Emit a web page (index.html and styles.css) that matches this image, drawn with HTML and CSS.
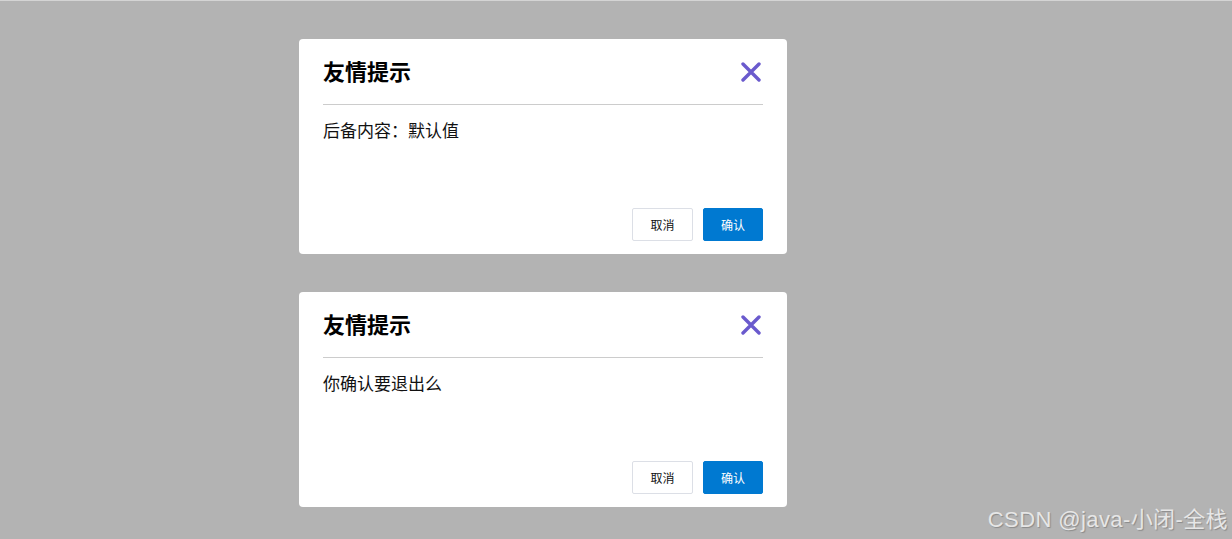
FILE: index.html
```html
<!DOCTYPE html>
<html lang="zh">
<head>
<meta charset="utf-8">
<title>友情提示</title>
<link rel="stylesheet" href="styles.css">
</head>
<body>
<div class="stage">
  <div class="dialog">
    <div class="dlg-head">
      <h2 class="dlg-title">友情提示</h2>
      <svg class="dlg-close" width="20" height="20" viewBox="0 0 20 20"><path d="M2 2 L18 18 M18 2 L2 18" stroke="#6a5acd" stroke-width="3.4" stroke-linecap="round"/></svg>
    </div>
    <div class="dlg-body">后备内容：默认值</div>
    <div class="dlg-foot">
      <button class="btn btn-cancel">取消</button>
      <button class="btn btn-ok">确认</button>
    </div>
  </div>
  <div class="dialog">
    <div class="dlg-head">
      <h2 class="dlg-title">友情提示</h2>
      <svg class="dlg-close" width="20" height="20" viewBox="0 0 20 20"><path d="M2 2 L18 18 M18 2 L2 18" stroke="#6a5acd" stroke-width="3.4" stroke-linecap="round"/></svg>
    </div>
    <div class="dlg-body">你确认要退出么</div>
    <div class="dlg-foot">
      <button class="btn btn-cancel">取消</button>
      <button class="btn btn-ok">确认</button>
    </div>
  </div>
</div>
<div class="watermark">CSDN @java-小闭-全栈</div>
</body>
</html>
```
FILE: styles.css
```css
html, body {
  margin: 0;
  height: 100%;
}
body {
  background: #b3b3b3;
  border-top: 1px solid #d4d4d4;
  box-sizing: border-box;
  font-family: "Noto Sans CJK SC", "Noto Sans", sans-serif;
  color: #111;
  overflow: hidden;
  position: relative;
}
.stage {
  padding: 38px 0 0 299px;
  display: flex;
  flex-direction: column;
  gap: 38px;
}
.dialog {
  width: 488px;
  height: 215px;
  box-sizing: border-box;
  background: #fff;
  border-radius: 4px;
  padding: 0 24px;
  display: flex;
  flex-direction: column;
}
.dlg-head {
  height: 65px;
  display: flex;
  align-items: center;
  justify-content: space-between;
  border-bottom: 1px solid #cccccc;
}
.dlg-title {
  margin: 0 0 4px;
  font-size: 22px;
  font-weight: 700;
  color: #000;
  line-height: 30px;
}
.dlg-close {
  margin-right: 2px;
  display: block;
}
.dlg-body {
  flex: 1;
  padding-top: 12px;
  font-size: 17px;
  line-height: 26px;
  color: #111;
}
.dlg-foot {
  display: flex;
  justify-content: flex-end;
  gap: 10px;
  padding-bottom: 13px;
}
.btn {
  height: 33px;
  box-sizing: border-box;
  border-radius: 2px;
  font-family: "Noto Sans CJK SC", sans-serif;
  font-size: 12px;
  padding: 0;
  cursor: pointer;
}
.btn-cancel {
  width: 61px;
  background: #fff;
  border: 1px solid #dcdfe6;
  color: #111;
}
.btn-ok {
  width: 60px;
  background: #0079d1;
  border: 1px solid #0079d1;
  color: #fff;
}
.watermark {
  position: absolute;
  right: 4px;
  bottom: 6px;
  font-family: "Liberation Sans", "Noto Sans CJK SC", sans-serif;
  font-size: 22px;
  letter-spacing: 0.4px;
  color: #e6e6e6;
  text-shadow: 1px 1px 1px #8a8a8a;
  line-height: 26px;
}
```
